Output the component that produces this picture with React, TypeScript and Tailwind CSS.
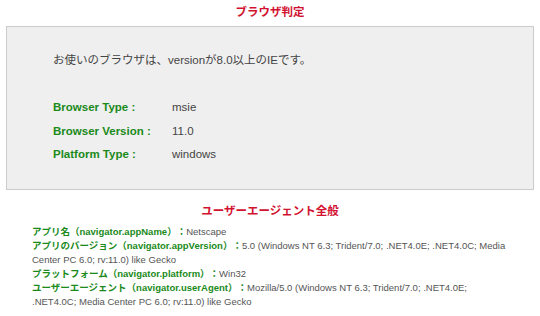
import React from 'react';

const font = { fontFamily: '"Liberation Sans", "Noto Sans CJK JP", sans-serif' };

const rows = [
  { label: 'Browser Type :', value: 'msie' },
  { label: 'Browser Version :', value: '11.0' },
  { label: 'Platform Type :', value: 'windows' },
];

const agents = [
  { label: 'アプリ名（navigator.appName）：', value: 'Netscape' },
  {
    label: 'アプリのバージョン（navigator.appVersion）：',
    value: '5.0 (Windows NT 6.3; Trident/7.0; .NET4.0E; .NET4.0C; Media Center PC 6.0; rv:11.0) like Gecko',
  },
  { label: 'プラットフォーム（navigator.platform）：', value: 'Win32' },
  {
    label: 'ユーザーエージェント（navigator.userAgent）：',
    value: 'Mozilla/5.0 (Windows NT 6.3; Trident/7.0; .NET4.0E; .NET4.0C; Media Center PC 6.0; rv:11.0) like Gecko',
  },
];

export default function App() {
  return (
    <div className="w-[540px] h-[316px] bg-white overflow-hidden [text-spacing-trim:space-all]" style={font}>
      {/* Browser check */}
      <h2 className="h-[26px] flex items-center justify-center text-[11.5px] font-bold text-[#d2112f]">
        ブラウザ判定
      </h2>
      <div className="mx-[6px] h-[164px] border border-[#cccccc] bg-[#efefef] pl-[46px] pt-[23px]">
        <p className="text-[11.5px] leading-[20px] text-[#444]">
          お使いのブラウザは、versionが8.0以上のIEです。
        </p>
        <div className="mt-[26px]">
          {rows.map((r) => (
            <div key={r.label} className="flex text-[11.5px] leading-[23.5px]">
              <span className="w-[119px] font-bold text-[#1a8a1a]">{r.label}</span>
              <span className="text-[#444]">{r.value}</span>
            </div>
          ))}
        </div>
      </div>

      {/* User agent */}
      <h2 className="mt-[12px] h-[20px] flex items-center justify-center text-[11.5px] font-bold text-[#d2112f]">
        ユーザーエージェント全般
      </h2>
      <div className="mt-[3px] px-8">
        {agents.map((a) => (
          <p key={a.label} className="text-[9.5px] leading-[14px] text-[#555]">
            <span className="font-bold text-[#1a8a1a]">{a.label}</span>
            {a.value}
          </p>
        ))}
      </div>
    </div>
  );
}
